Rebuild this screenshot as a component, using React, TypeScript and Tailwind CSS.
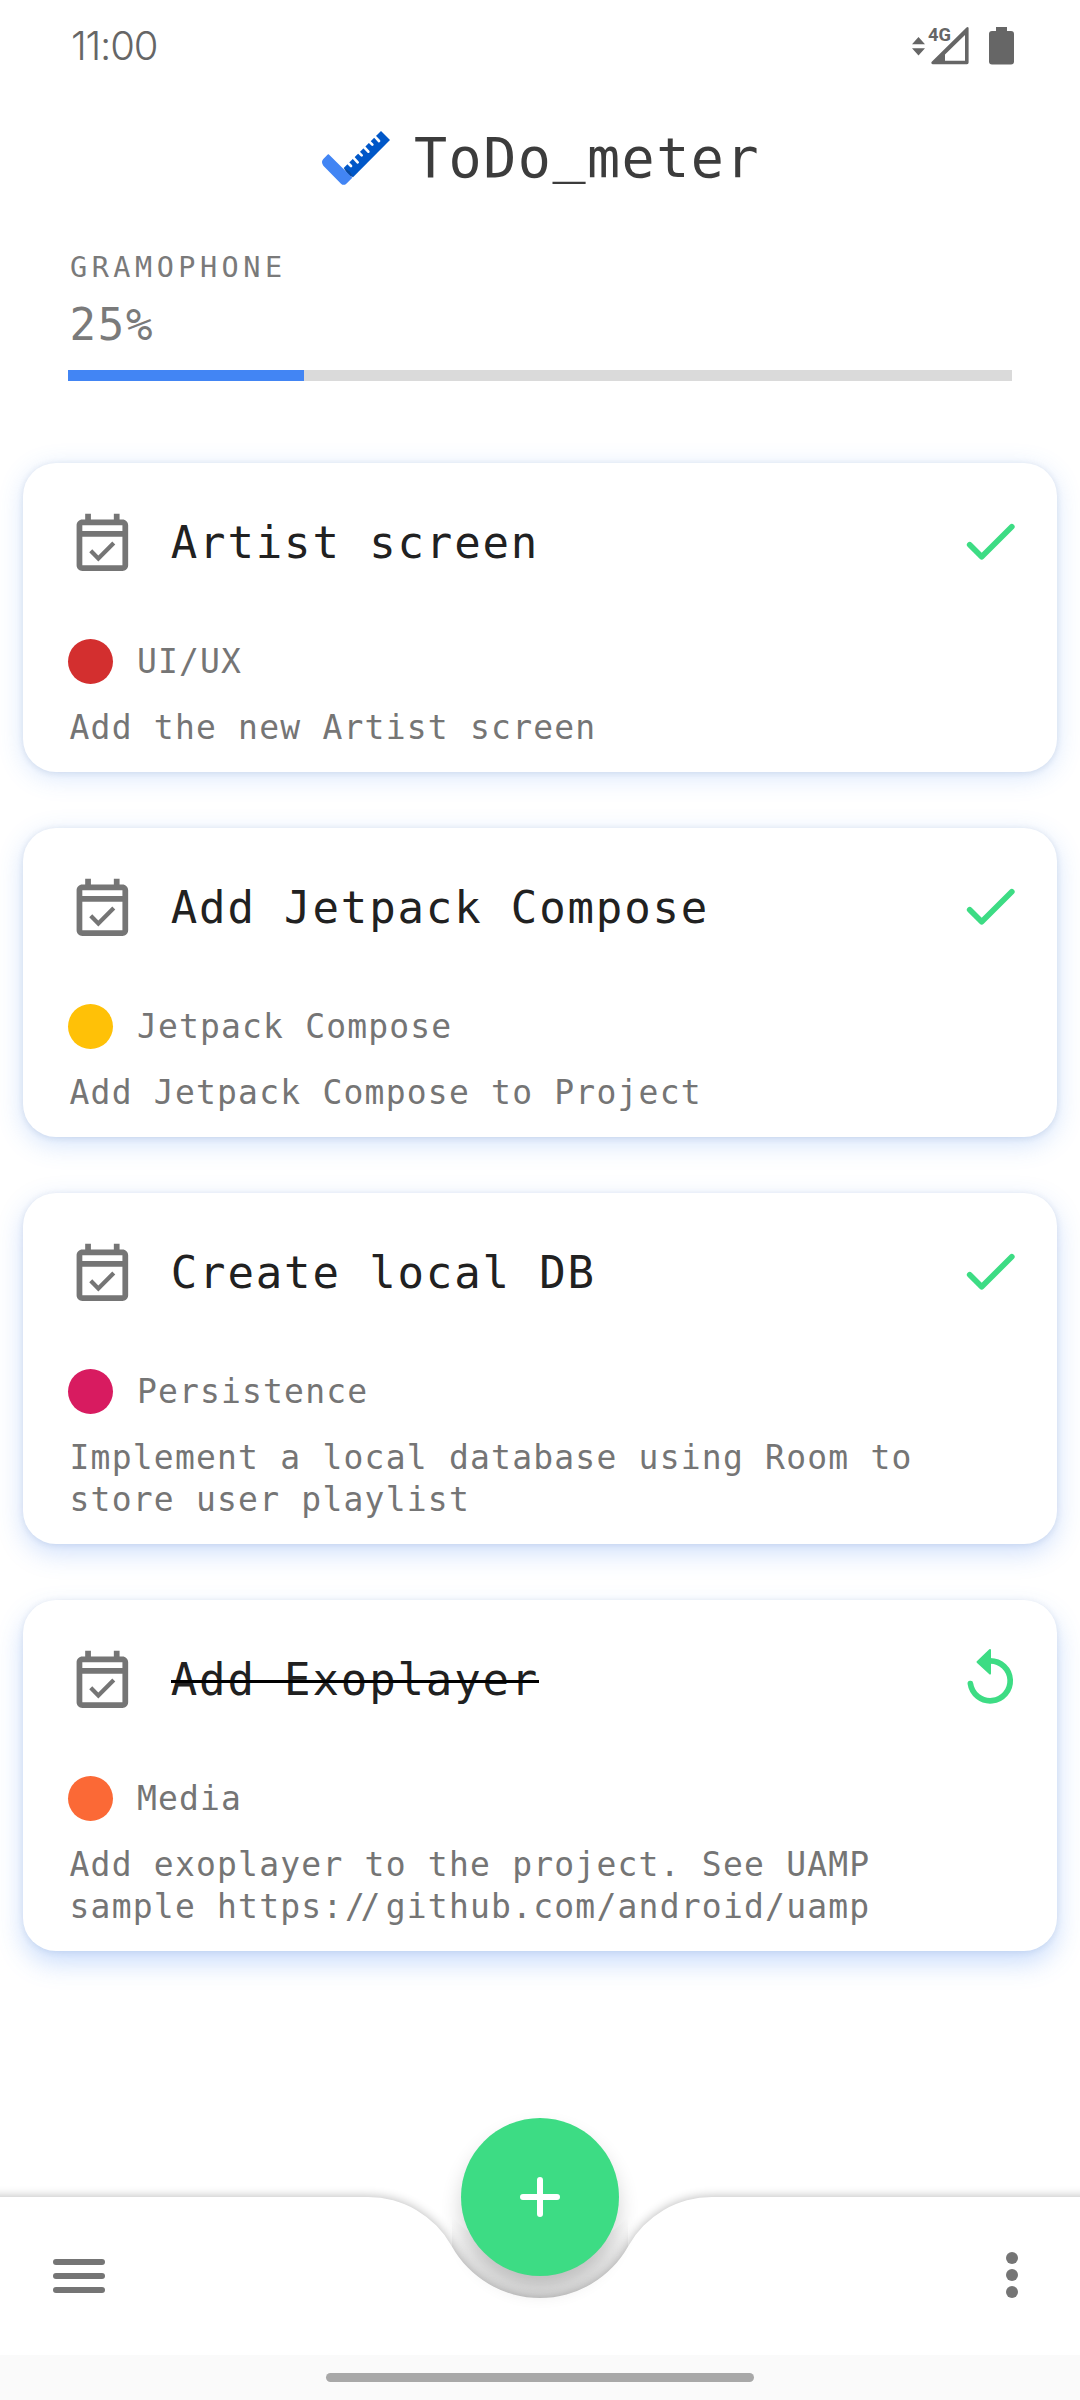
import type { ReactNode } from "react";

type Task = {
  title: string;
  tag: string;
  color: string;
  lines: ReactNode[];
  done?: boolean;
  shadow: string;
};

const tasks: Task[] = [
  {
    title: "Artist screen",
    tag: "UI/UX",
    color: "bg-[#d32f2f]",
    lines: ["Add the new Artist screen"],
    shadow: "shadow-[0_5px_26px_rgba(66,133,244,0.20),0_1px_6px_rgba(40,70,120,0.14)]",
  },
  {
    title: "Add Jetpack Compose",
    tag: "Jetpack Compose",
    color: "bg-[#ffc107]",
    lines: ["Add Jetpack Compose to Project"],
    shadow: "shadow-[0_7px_26px_rgba(66,133,244,0.23),0_1px_6px_rgba(40,70,120,0.14)]",
  },
  {
    title: "Create local DB",
    tag: "Persistence",
    color: "bg-[#d81b60]",
    lines: ["Implement a local database using Room to", "store user playlist"],
    shadow: "shadow-[0_9px_26px_rgba(66,133,244,0.25),0_1px_6px_rgba(40,70,120,0.13)]",
  },
  {
    title: "Add Exoplayer",
    tag: "Media",
    color: "bg-[#fb6936]",
    lines: [
      "Add exoplayer to the project. See UAMP",
      <>
        sample https:<span className="mr-[9.9px] ml-[1.5px] tracking-[-4.5px]">//</span>github.com/android/uamp
      </>,
    ],
    done: true,
    shadow: "shadow-[0_12px_26px_rgba(66,133,244,0.28),0_1px_6px_rgba(40,70,120,0.12)]",
  },
];

function Logo() {
  return (
    <svg width="90" height="75" viewBox="0 0 270 225" className="-mt-[2px] -ml-[9px] shrink-0">
      <path d="M210 33L237 60L126 172L98 144Z" fill="#0057c8" />
      <path
        d="M111 129l9 9M127 113l13 14M143 97l9 9M159 81l13 14M175 65l9 9M191 49l13 14"
        stroke="#fff"
        strokeWidth="8"
        strokeLinecap="round"
      />
      <path d="M98 144L116 154L126 172L112 166Z" fill="#094a9f" />
      <path
        d="M53 103L124 173L106 191Q98 198 90 191L37 137Q29 125 37 117L48 106Q51 102 53 103Z"
        fill="#4285f4"
      />
    </svg>
  );
}

function CalendarIcon() {
  return (
    <svg width="68.75" height="68.75" viewBox="0 0 24 24" fill="#757575" className="-mt-[1px] shrink-0">
      <path
        fillRule="evenodd"
        d="M19 4h-1V2h-2v2H8V2H6v2H5c-1.1 0-2 .9-2 2v14c0 1.1.9 2 2 2h14c1.1 0 2-.9 2-2V6c0-1.1-.9-2-2-2zm0 16H5V10h14v10zm0-12H5V6h14v2z"
      />
      <path d="M16.5 12.75l-1.05-1.05-4.86 4.85-2.12-2.12-1.06 1.06 3.18 3.18z" />
    </svg>
  );
}

function CheckIcon() {
  return (
    <svg width="66" height="66" viewBox="0 0 66 66" className="-mt-[3px] shrink-0">
      <path
        d="M12.7 36.7L24.7 48.8L54.8 18.7"
        fill="none"
        stroke="#3ddc84"
        strokeWidth="5.7"
        strokeLinecap="round"
        strokeLinejoin="round"
      />
    </svg>
  );
}

function ReplayIcon() {
  return (
    <svg width="66" height="66" viewBox="0 0 66 66" className="-mt-[3px] shrink-0">
      <path
        d="M33.2 15.8A20 20 0 1 1 13.4 38.6"
        fill="none"
        stroke="#3ddc84"
        strokeWidth="5.7"
        strokeLinecap="round"
      />
      <path
        d="M33 5L20.500 16.900L33 28.600Z"
        fill="#3ddc84"
        stroke="#3ddc84"
        strokeWidth="2"
        strokeLinejoin="round"
      />
    </svg>
  );
}

function TaskCard({ task }: { task: Task }) {
  return (
    <article className={`rounded-[33px] bg-white pt-[45px] pr-[34px] pb-[23px] pl-[45px] ${task.shadow}`}>
      <div className="flex h-[69px] items-center">
        <CalendarIcon />
        <h2 className="ml-[34px] flex-1 text-[44px] leading-[58px] tracking-[1.85px] whitespace-pre text-[#212121]">
          <span className="relative">
            {task.title}
            {task.done && <span className="absolute top-[26px] left-0 h-[3px] w-full bg-black" />}
          </span>
        </h2>
        {task.done ? <ReplayIcon /> : <CheckIcon />}
      </div>
      <div className="mt-[62px] flex h-[45px] items-center">
        <span className={`size-[45px] rounded-full ${task.color}`} />
        <span className="ml-[24px] text-[33px] leading-[42px] tracking-[1.15px] text-[#757575]">{task.tag}</span>
      </div>
      <div className="mt-[23px] ml-[1.5px] text-[33px] leading-[42px] tracking-[1.21px] text-[#757575]">
        {task.lines.map((line, i) => (
          <p key={i} className="whitespace-pre">
            {line}
          </p>
        ))}
      </div>
    </article>
  );
}

function StatusBar() {
  return (
    <header className="flex h-[92px] items-center justify-between pr-[64px] pl-[71px] text-[#666]">
      <span className="font-['Inter'] text-[40px] leading-[48px] font-light tracking-[-1.2px]">11:00</span>
      <svg width="106" height="44" viewBox="910 24 106 44" fill="#666">
        <path d="M912 44.3L918.5 37L925 44.3ZM912 48.2L918.5 55.5L925 48.2Z" />
        <text x="928" y="41" fontSize="19" fontWeight="700" fontFamily="Roboto" textLength="23" lengthAdjust="spacingAndGlyphs">
          4G
        </text>
        <path
          fillRule="evenodd"
          d="M968.6 28V62.5Q968.6 64.2 967 64.2H932.5Q930.5 63.5 931.5 62L966.5 27.5Q968.2 26.5 968.6 28ZM965 35L945 54.5V60.8H965Z"
        />
        <path d="M996 27h11v4h4q3 0 3 3v27.500q0 3-3 3h-19q-3 0-3-3V34q0-3 3-3h4z" />
      </svg>
    </header>
  );
}

function BottomBar() {
  return (
    <footer className="relative mt-auto h-[203px]">
      <svg width="1080" height="300" viewBox="0 -100 1080 300" className="absolute -top-[100px] left-0">
        <defs>
          <linearGradient id="notch" x1="0" y1="0" x2="0" y2="1">
            <stop offset="0" stopColor="#000" stopOpacity="0" />
            <stop offset="0.5" stopColor="#000" stopOpacity="0.08" />
            <stop offset="1" stopColor="#000" stopOpacity="0.11" />
          </linearGradient>
          <filter id="edge" x="-5%" y="-30%" width="110%" height="160%">
            <feGaussianBlur stdDeviation="5.500" />
          </filter>
          <filter id="fab" x="-50%" y="-50%" width="200%" height="200%">
            <feGaussianBlur stdDeviation="11" />
          </filter>
        </defs>
        <path d="M452 20Q470 40 540 79Q610 40 628 20V60L600 105H480L452 60Z" fill="url(#notch)" />
        <path
          d="M-30 0H368A96 96 0 0 1 451.800 49.200A101 101 0 0 0 628.200 49.200A96 96 0 0 1 712 0H1110V158H-30Z"
          fill="#000"
          opacity="0.29"
          filter="url(#edge)"
        />
        <path
          d="M0 0H368A96 96 0 0 1 451.800 49.200A101 101 0 0 0 628.200 49.200A96 96 0 0 1 712 0H1080V158H0Z"
          fill="#fff"
        />
        <circle cx="540" cy="13" r="78" fill="#000" opacity="0.19" filter="url(#fab)" />
      </svg>
      <button
        aria-label="Add task"
        className="absolute -top-[79px] left-[461px] flex size-[158px] items-center justify-center rounded-full bg-[#3ddc84]"
      >
        <svg width="40" height="40" viewBox="0 0 40 40" stroke="#fff" strokeWidth="6" strokeLinecap="round">
          <path d="M20 3V37M3 20H37" />
        </svg>
      </button>
      <div className="relative flex h-[158px] items-center justify-between pr-[62px] pl-[53px]">
        <div className="flex w-[52px] flex-col gap-[8px]">
          <span className="h-[6px] rounded-full bg-[#757575]" />
          <span className="h-[6px] rounded-full bg-[#757575]" />
          <span className="h-[6px] rounded-full bg-[#757575]" />
        </div>
        <div className="flex flex-col gap-[5px] pb-[3px]">
          <span className="size-[12px] rounded-full bg-[#757575]" />
          <span className="size-[12px] rounded-full bg-[#757575]" />
          <span className="size-[12px] rounded-full bg-[#757575]" />
        </div>
      </div>
      <div className="relative flex h-[45px] items-center justify-center bg-[#fafafa]">
        <span className="h-[9px] w-[428px] rounded-full bg-[#a8a8a8]" />
      </div>
    </footer>
  );
}

export default function App() {
  return (
    <div className="flex h-[2400px] w-[1080px] flex-col overflow-hidden bg-white font-['DejaVu_Sans_Mono',monospace]">
      <StatusBar />
      <div className="flex h-[132px] items-center justify-center">
        <Logo />
        <h1 className="ml-[13px] text-[55px] leading-[72px] tracking-[1.5px] text-[#3c3c3c]">
          ToDo<span className="relative -top-[6px]">_</span>meter
        </h1>
      </div>
      <section className="px-[68px] pt-[24px] text-[#7a7a7a]">
        <p className="ml-[2px] text-[28.5px] leading-[40px] tracking-[4.5px]">GRAMOPHONE</p>
        <p className="mt-[8px] ml-[1.5px] text-[44px] leading-[58px] tracking-[1.8px]">25%</p>
        <div className="mt-[16px] h-[11px] bg-[#dadada]">
          <div className="h-full w-1/4 bg-[#4285f4]" />
        </div>
      </section>
      <main className="flex flex-col gap-[56px] px-[23px] pt-[82px]">
        {tasks.map((task) => (
          <TaskCard key={task.title} task={task} />
        ))}
      </main>
      <BottomBar />
    </div>
  );
}
